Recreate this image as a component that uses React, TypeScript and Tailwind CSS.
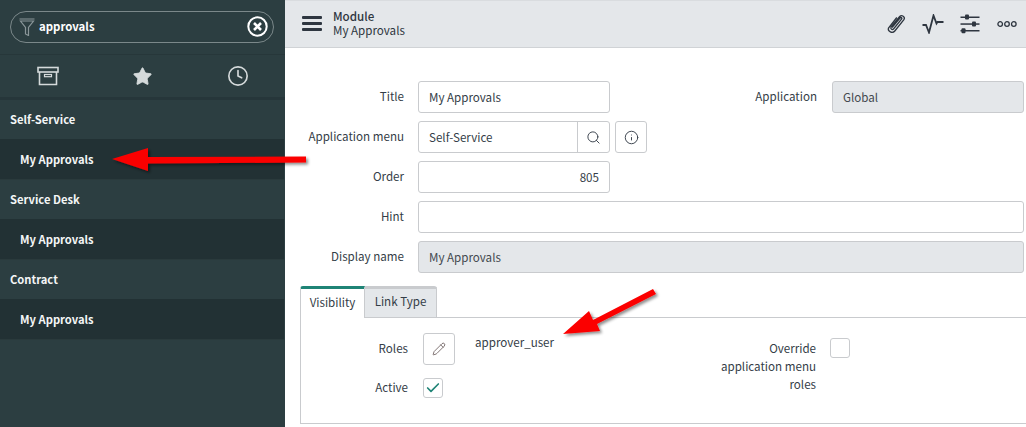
import React from "react";
import { Check, Clock, Info, Pencil, Search, Star } from "lucide-react";

const Label = ({ children, className = "" }: { children: React.ReactNode; className?: string }) => (
  <div className={`pb-[2px] text-right text-[11.6px] leading-[18px] text-[#343d47] ${className}`}>{children}</div>
);

const Field = ({ value, className = "", right = false, readOnly = false }: { value?: string; className?: string; right?: boolean; readOnly?: boolean }) => (
  <div
    className={`flex h-8 items-center rounded-[3px] border border-[#c9cbce] px-[10px] text-[11.6px] leading-[18px] ${
      right ? "justify-end" : ""
    } ${readOnly ? "bg-[#e4e7ea] text-[#43494f]" : "bg-white text-[#343d47]"} ${className}`}
  >
    {value}
  </div>
);

const SideGroup = ({ title }: { title: string }) => (
  <>
    <div className="flex h-[39px] items-center pl-[10px] pr-px text-[11.2px] font-semibold text-[#f4f6f6]">{title}</div>
    <div className="mr-px flex h-[41px] items-center border-b border-[#2a3a3c] bg-[#223134] pl-[20px] text-[11.2px] font-semibold text-[#f4f6f6]">
      My Approvals
    </div>
  </>
);

const Sidebar = () => (
  <aside className="flex h-full w-[285px] shrink-0 flex-col bg-[#2c3e41]">
    <div className="flex h-[55px] items-center border-b border-[#27373a] px-[10px] pb-px">
      <div className="flex h-8 w-[264px] items-center rounded-full border border-[#7b888a] pl-2 pr-[5px]">
        <svg width="16" height="18" viewBox="0 0 16 18" fill="none" stroke="#8a9699" strokeWidth="1.2">
          <path d="M0.500 1h15M1.500 3h13L9.500 9.500v8l-3-1.500V9.500z" />
        </svg>
        <span className="ml-[4px] flex-1 pt-px text-[11.4px] font-semibold text-white">approvals</span>
        <svg width="21" height="21" viewBox="0 0 21 21" fill="none" stroke="#fff">
          <circle cx="10.500" cy="10.500" r="9.200" strokeWidth="2" />
          <path d="M7 7l7 7M14 7l-7 7" strokeWidth="2.600" />
        </svg>
      </div>
    </div>
    <div className="grid h-[45px] grid-cols-3 place-items-center border-b-[3px] border-[#26363a] text-[#d5dadb]">
      <svg width="22" height="20" viewBox="0 0 22 20" fill="none" stroke="currentColor" strokeWidth="1.600">
        <rect x="1" y="1.500" width="20" height="4.500" />
        <path d="M2.500 6v12.500h17V6" />
        <rect x="7.500" y="8.500" width="7" height="2.200" strokeWidth="1.200" />
      </svg>
      <Star size={21} fill="currentColor" strokeWidth={1} />
      <Clock size={22} strokeWidth={1.800} />
    </div>
    <SideGroup title="Self-Service" />
    <SideGroup title="Service Desk" />
    <SideGroup title="Contract" />
  </aside>
);

const Toolbar = () => (
  <header className="flex h-[48px] shrink-0 items-center border-y border-[#d0d3d6] border-t-[#d9dcdf] bg-[#e4e7ea] pl-[17px] pr-[9px] text-[#2e3640]">
    <div className="flex w-[20px] flex-col gap-[3px] pb-px">
      <div className="h-[3px] rounded-[1px] bg-[#2e3640]" />
      <div className="h-[3px] rounded-[1px] bg-[#2e3640]" />
      <div className="h-[3px] rounded-[1px] bg-[#2e3640]" />
    </div>
    <div className="ml-[11px] flex-1 pb-[2px] text-[11.6px] leading-[14px]">
      <div className="font-medium">Module</div>
      <div>My Approvals</div>
    </div>
    <div className="flex items-center">
      <svg width="22" height="22" viewBox="0 0 22 22" fill="none" stroke="currentColor" strokeWidth="1.300">
        <path d="M7 14.500L15 5c.9-1 2.400-.2 1.700 1L8.500 16c-1.100 1.200-3.300 0-2.500-1.800L14.700 3.500c2-2.200 6 .3 4.200 3.200L9.800 18c-2.300 2.800-7.500.6-6.300-3L11.800 4.500" />
      </svg>
      <svg className="ml-[15px]" width="22" height="20" viewBox="0 0 22 20" fill="none" stroke="currentColor" strokeWidth="1.800">
        <path d="M0.500 11h3.500l3 7.500L11.500 1.500l3 8 1-1.500h6" />
      </svg>
      <svg className="ml-[16px]" width="20" height="20" viewBox="0 0 20 20" fill="currentColor">
        <rect x="0.500" y="2.500" width="19" height="1.500" />
        <rect x="5" y="0.500" width="4" height="5" rx="1" />
        <rect x="0.500" y="9.300" width="19" height="1.500" />
        <rect x="12" y="7.500" width="4" height="5" rx="1" />
        <rect x="0.500" y="16" width="19" height="1.500" />
        <rect x="1.500" y="14.300" width="4" height="5" rx="1" />
      </svg>
      <svg className="ml-[17px]" width="20" height="8" viewBox="0 0 20 8" fill="none" stroke="currentColor" strokeWidth="1.300">
        <circle cx="3.200" cy="4" r="2.300" />
        <circle cx="10" cy="4" r="2.300" />
        <circle cx="16.800" cy="4" r="2.300" />
      </svg>
    </div>
  </header>
);

const Tabs = () => (
  <div className="ml-[15px] mt-[13px]">
    <div className="flex h-[31px]">
      <div className="z-10 -mb-px flex w-[65px] items-center justify-center rounded-tl-[3px] border-x border-t-[3px] border-x-[#c9cbce] border-t-[#1f8476] bg-white pb-[2px] text-[11.6px] text-[#343d47]">
        Visibility
      </div>
      <div className="flex w-[72px] items-center justify-center rounded-tr-[3px] border-r border-t-[3px] border-r-[#c9cbce] border-t-[#c9cbce] bg-[#e4e7ea] pb-[2px] text-[11.6px] text-[#343d47]">
        Link Type
      </div>
    </div>
    <div className="flex h-[107px] border-y border-l border-[#c9cbce] pt-[15px]">
      <div className="w-[107px] shrink-0">
        <div className="flex h-8 items-center justify-end">
          <Label>Roles</Label>
        </div>
        <div className="mt-[13px] flex h-5 items-center justify-end">
          <Label className="pb-0">Active</Label>
        </div>
      </div>
      <div className="ml-[15px] w-[52px] shrink-0">
        <div className="flex h-8 w-8 items-center justify-center rounded-[3px] border border-[#c9cbce] bg-white text-[#5a4a4a]">
          <Pencil size={14} strokeWidth={1.300} />
        </div>
        <div className="mt-[13px] flex h-5 w-5 items-center justify-center rounded-[3px] border border-[#c9cbce] bg-white text-[#1f8476]">
          <Check size={16} strokeWidth={2.500} />
        </div>
      </div>
      <div className="w-[241px] shrink-0 text-[11.6px] leading-[18px] text-[#343d47]">approver_user</div>
      <Label className="mt-[6px] w-[100px] shrink-0">
        Override
        <br />
        application menu
        <br />
        roles
      </Label>
      <div className="ml-[14px] mt-[5px] h-5 w-5 rounded-[3px] border border-[#c9cbce] bg-white" />
    </div>
  </div>
);

const Form = () => (
  <div className="flex flex-col gap-2 pr-[2px] pt-[33px]">
    <div className="flex items-center">
      <Label className="w-[119px] shrink-0">Title</Label>
      <Field value="My Approvals" className="ml-[14px] w-[192px]" />
      <Label className="w-[207px] shrink-0">Application</Label>
      <Field value="Global" className="ml-[15px] w-[192px]" readOnly />
    </div>
    <div className="flex items-center">
      <Label className="w-[119px] shrink-0">Application menu</Label>
      <div className="ml-[14px] flex h-8 w-[192px] items-center rounded-[3px] border border-[#c9cbce] text-[11.6px] text-[#343d47]">
        <span className="flex-1 pl-[10px] pt-px">Self-Service</span>
        <span className="flex h-full w-8 items-center justify-center border-l border-[#c9cbce]">
          <Search size={15} strokeWidth={1.500} />
        </span>
      </div>
      <div className="ml-[5px] flex h-8 w-8 items-center justify-center rounded-[3px] border border-[#c9cbce] text-[#343d47]">
        <Info size={15} strokeWidth={1.500} />
      </div>
    </div>
    <div className="flex items-center">
      <Label className="w-[119px] shrink-0">Order</Label>
      <Field value="805" right className="ml-[14px] w-[192px]" />
    </div>
    <div className="flex items-center">
      <Label className="w-[119px] shrink-0">Hint</Label>
      <Field className="ml-[14px] flex-1" />
    </div>
    <div className="flex items-center">
      <Label className="w-[119px] shrink-0">Display name</Label>
      <Field value="My Approvals" className="ml-[14px] flex-1" readOnly />
    </div>
  </div>
);

// the two red callout arrows sit on top of the page
const Arrows = () => (
  <svg className="pointer-events-none absolute inset-0" width="1026" height="427" viewBox="0 0 1026 427">
    <defs>
      <filter id="arrowShadow" x="-10%" y="-30%" width="120%" height="160%">
        <feDropShadow dx="2" dy="2" stdDeviation="1.500" floodColor="#000" floodOpacity="0.450" />
      </filter>
    </defs>
    <g fill="#fb0000" filter="url(#arrowShadow)">
      <path d="M112 159L148 148V157L306 156.500V162.500L148 163.500V171Z" />
      <path d="M563 334L589 311L593 320L653 289L656 294L597 324L600 331Z" />
    </g>
  </svg>
);

export default function App() {
  return (
    <div className="relative flex h-[427px] w-[1026px] overflow-hidden bg-white font-['Noto_Sans_CJK_SC','Noto_Sans',sans-serif]">
      <Sidebar />
      <main className="flex min-w-0 flex-1 flex-col">
        <Toolbar />
        <Form />
        <Tabs />
      </main>
      <Arrows />
    </div>
  );
}
